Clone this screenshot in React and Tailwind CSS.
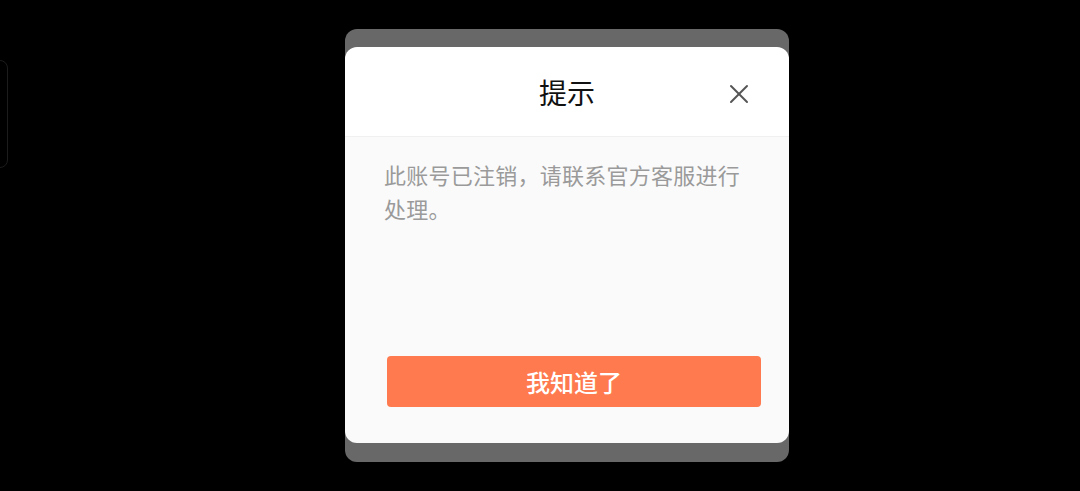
import { X } from "lucide-react";

const font = { fontFamily: '"Noto Sans CJK SC", "Noto Sans", sans-serif' };

export default function App() {
  return (
    <div className="relative w-[1080px] h-[491px] bg-black overflow-hidden" style={font}>
      {/* faint card peeking in at the left edge */}
      <div className="absolute left-[-40px] top-[60px] w-[48px] h-[108px] rounded-[8px] border border-[#1c1c1c]" />

      <div className="pl-[345px] pt-[29px]">
        <div className="w-[444px] rounded-[12px] bg-[#686868] pt-[18px] pb-[19px]">
          <div className="rounded-[12px] overflow-hidden">
            <div className="relative h-[90px] bg-white border-b border-[#f0f0f0] flex items-center justify-center">
              <span className="text-[28px] leading-none text-[#111]">提示</span>
              <X className="absolute right-[34px] top-[31px] w-[32px] h-[32px] text-[#555]" strokeWidth={1.5} />
            </div>
            <div className="h-[306px] bg-[#fafafa] flex flex-col">
              <p className="pt-[20px] pl-[39px] pr-[30px] text-[22px] leading-[34px] tracking-[0.25px] text-[#9a9a9a]">
                此账号已注销，请联系官方客服进行处理。
              </p>
              <button className="mt-auto mb-[36px] ml-[42px] w-[374px] h-[51px] rounded-[4px] bg-[#ff7a4e] text-white text-[24px] font-medium leading-none flex items-center justify-center">
                我知道了
              </button>
            </div>
          </div>
        </div>
      </div>
    </div>
  );
}
